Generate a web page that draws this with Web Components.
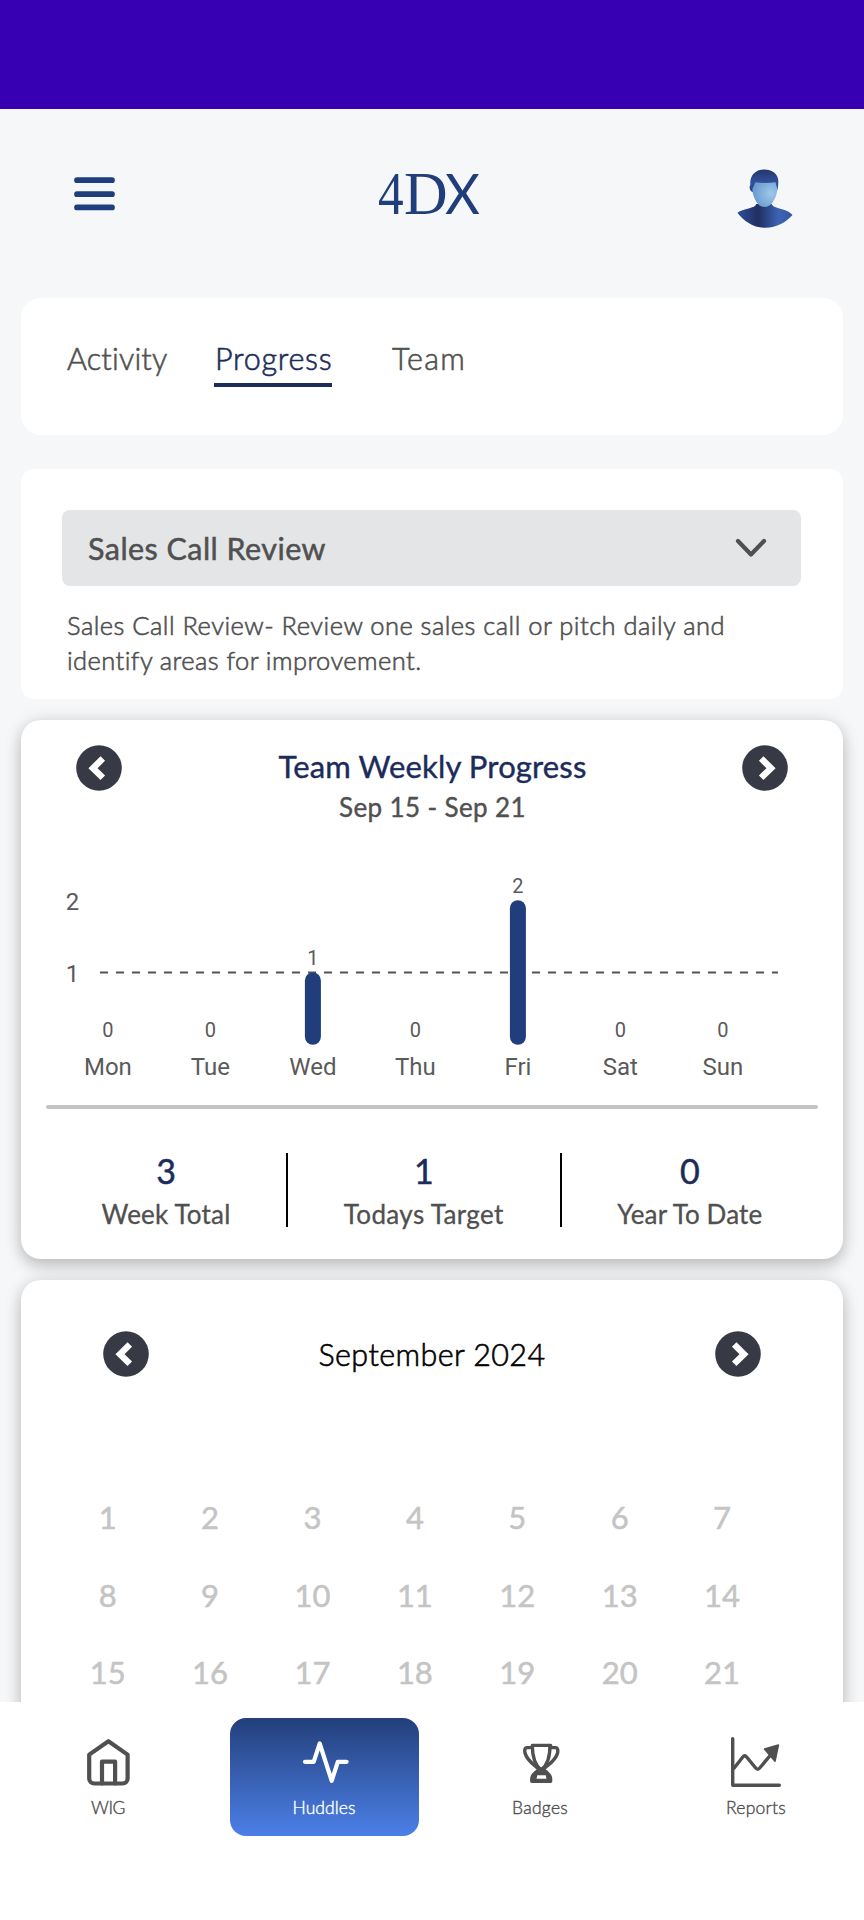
<!DOCTYPE html>
<html lang="en">
  <head>
    <meta charset="UTF-8" />
    <meta name="viewport" content="width=device-width, initial-scale=1.0" />
    <title>4DX Huddles</title>
    <style>
      html,
      body {
        margin: 0;
        height: 100%;
      }
      body {
        font-family: Lato, 'Noto Sans', sans-serif;
        font-weight: 300;
        -webkit-text-stroke: 0.6px;
        color: #505050;
        background: #f5f7f9;
        overflow: hidden;
      }
    </style>
  </head>
  <body>
    <app-shell>
      <app-header slot="header"></app-header>
      <app-card style="height: 137px">
        <tab-bar></tab-bar>
      </app-card>
      <app-card style="height: 230px; margin-top: 34px; --radius: 13px">
        <lead-measure>
          <fit-text width="238">Sales Call Review</fit-text>
          <fit-text slot="note" width="658">Sales Call Review- Review one sales call or pitch daily and</fit-text>
          <fit-text slot="note" width="355">identify areas for improvement.</fit-text>
        </lead-measure>
      </app-card>
      <app-card raised style="height: 539px; margin-top: 21px">
        <weekly-progress values="0,0,1,0,2,0,0"></weekly-progress>
      </app-card>
      <app-card raised style="height: 600px; margin-top: 21px">
        <month-calendar></month-calendar>
      </app-card>
      <bottom-nav slot="nav"></bottom-nav>
    </app-shell>

    <script>
      const define = (name, html, setup) => {
        const template = document.createElement('template');
        template.innerHTML = html;
        customElements.define(
          name,
          class extends HTMLElement {
            connectedCallback() {
              if (this.shadowRoot) return;
              const shadow = this.attachShadow({ mode: 'open' });
              shadow.appendChild(template.content.cloneNode(true));
              if (setup) setup(this, shadow);
            }
          }
        );
      };

      define(
        'app-shell',
        `<style>
          :host { display: flex; flex-direction: column; height: 1920px; overflow: hidden; }
          .status { flex: none; height: 108.6px; background: #3700b3; }
          main { flex: 1; min-height: 0; overflow: hidden; padding: 0 21px; }
        </style>
        <div class="status"></div>
        <slot name="header"></slot>
        <main><slot></slot></main>
        <slot name="nav"></slot>`
      );

      define(
        'app-header',
        `<style>
          :host {
            display: grid; grid-template-columns: 304px 1fr 56px; align-items: center;
            flex: none; height: 189.4px; box-sizing: border-box; padding: 0 71px 19px 74px;
            font-weight: 400; -webkit-text-stroke: 0;
          }
          svg { display: block; }
          .logo { color: #203e7b; font: 61px/60px 'Liberation Serif', serif; display: flex; align-items: baseline; margin-top: -1px; }
          .four { width: 25.5px; transform: scaleX(.84); transform-origin: 0 0; }
          .d { width: 43px; transform: scaleX(.99); transform-origin: 0 0; }
          .x { font: 56px/60px Lato, sans-serif; transform: scaleX(.96); transform-origin: 0 0; margin-left: -2px; }
          .avatar { margin-top: 11px; }
        </style>
        <svg width="41" height="34" stroke="#203e7b" stroke-width="5.7" stroke-linecap="round">
          <path d="M3 3.2H38M3 17.2H38M3 30.4H38" />
        </svg>
        <div class="logo"><span class="four">4</span><span class="d">D</span><span class="x">X</span></div>
        <svg class="avatar" width="56" height="60" viewBox="0 0 56 60">
          <defs>
            <linearGradient id="suit">
              <stop offset="0" stop-color="#2f4f98" />
              <stop offset=".38" stop-color="#212f63" />
              <stop offset=".75" stop-color="#3c64b4" />
              <stop offset="1" stop-color="#34569f" />
            </linearGradient>
            <linearGradient id="hair" x2="0" y2="1">
              <stop offset="0" stop-color="#24366c" />
              <stop offset=".6" stop-color="#33529d" />
              <stop offset="1" stop-color="#263d7a" />
            </linearGradient>
            <radialGradient id="face" cx=".75" cy=".45" r=".75">
              <stop offset="0" stop-color="#9dc8e8" />
              <stop offset="1" stop-color="#6799cd" />
            </radialGradient>
          </defs>
          <path fill="url(#suit)" d="M.4 43.7C6 39.5 18.5 39.5 19.3 35H34.7C35.5 40 50 39 55.5 46 49 53 40 58.8 28.3 58.8 16 58.8 7 52 .4 43.7Z" />
          <path fill="url(#hair)" d="M15.5 23C12.5 22 12 17.5 13.3 16 12.5 5 19.5 .4 27.3 .4S42 5 41.3 13.5C41.3 18 40.5 21 39.5 23Z" />
          <path fill="url(#face)" d="M18.5 13.3Q28 14.6 38.5 13.2L40.3 20C40 26 37.8 30 35.5 33.6 33.5 36.7 30.5 38 27.5 38S21.5 36.3 19.6 33.2C17.5 30 15.3 25 15.3 20Z" />
        </svg>`
      );

      define(
        'app-card',
        `<style>
          :host {
            display: block; box-sizing: border-box; background: #fff;
            border-radius: var(--radius, 20px);
          }
          :host([raised]) { box-shadow: 0 7px 16px rgba(0, 0, 0, .2), 0 0 18px rgba(0, 0, 0, .09); }
        </style>
        <slot></slot>`
      );

      define(
        'tab-bar',
        `<style>
          :host { display: flex; align-items: flex-start; padding: 38.5px 0 0 46px; font-size: 30.5px; line-height: 44px; }
          .tab { box-sizing: border-box; height: 50.5px; }
          .active { color: #1b2c5a; border-bottom: 4.5px solid #1b2c5a; margin: 0 59.5px 0 46.5px; padding-left: 1px; }
        </style>
        <div class="tab"><fit-text width="101">Activity</fit-text></div>
        <div class="tab active"><fit-text width="117.5">Progress</fit-text></div>
        <div class="tab"><fit-text width="74">Team</fit-text></div>`
      );

      define(
        'lead-measure',
        `<style>
          :host { display: block; padding: 41.5px 42px 0 41px; }
          .select {
            display: flex; align-items: center; justify-content: space-between; box-sizing: border-box;
            height: 76px; padding: 0 33px 0 26px; border-radius: 8px; background: #e4e5e7;
            font-size: 30.5px; font-weight: 400; -webkit-text-stroke: .5px;
          }
          .note { display: flex; flex-direction: column; align-items: flex-start; padding: 22px 0 0 5px; font-size: 25.5px; line-height: 34.5px; }
        </style>
        <div class="select">
          <slot></slot>
          <svg width="33" height="22" fill="none" stroke="#505050" stroke-width="4.2" stroke-linecap="round" stroke-linejoin="round">
            <path d="M3 4L16 17.5L29 4" />
          </svg>
        </div>
        <div class="note"><slot name="note"></slot></div>`
      );

      define(
        'arrow-button',
        `<style>
          :host { display: block; width: 46px; height: 46px; }
          :host([next]) { transform: scaleX(-1); }
          svg { display: block; }
        </style>
        <svg width="46" height="46">
          <circle cx="23" cy="23" r="22.8" fill="#373a45" />
          <path d="M26.8 13.5L17 23.2L26.8 32.8" fill="none" stroke="#fff" stroke-width="6.4" />
        </svg>`
      );

      define(
        'weekly-progress',
        `<style>
          :host { display: block; padding: 25px 25px 0; }
          header { display: flex; justify-content: space-between; height: 85px; padding: 0 30px; }
          .title { text-align: center; font-weight: 400; -webkit-text-stroke: .4px; margin: -1px 0 0 1px; }
          .title div { font-size: 31px; line-height: 44px; color: #1b2c5a; }
          .title div + div { font-size: 26px; line-height: 39px; color: #505050; }
          svg { display: block; }
          text { font-family: Roboto, sans-serif; font-weight: 400; -webkit-text-stroke: 0; fill: #5a5a5a; font-size: 24px; }
          .value { font-size: 20px; text-anchor: middle; }
          .day { text-anchor: middle; }
          hr { height: 4px; margin: 0 0 .5px; border: 0; border-radius: 3px; background: #c4c4c4; }
          .stats { display: grid; grid-template-columns: 242px 273.5px 1fr; margin-top: 43.5px; }
          .stats > div { height: 74px; text-align: center; box-sizing: border-box; border-right: 2.6px solid #000; }
          .stats > div:last-child { border: 0; }
          b { display: block; font-weight: 400; font-size: 34px; line-height: 36px; color: #1b2c5a; -webkit-text-stroke: .5px; }
          .stats fit-text { font-size: 26px; font-weight: 400; line-height: 50px; height: 38px; -webkit-text-stroke: .3px; }
        </style>
        <header>
          <arrow-button></arrow-button>
          <div class="title">
            <div><fit-text width="308">Team Weekly Progress</fit-text></div>
            <div><fit-text width="187">Sep 15 - Sep 21</fit-text></div>
          </div>
          <arrow-button next></arrow-button>
        </header>
        <svg width="772" height="275.5" viewBox="46 829.7 772 275.5"></svg>
        <hr />
        <div class="stats">
          <div><b>3</b><fit-text width="129">Week Total</fit-text></div>
          <div><b>1</b><fit-text width="160">Todays Target</fit-text></div>
          <div><b>0</b><fit-text width="145">Year To Date</fit-text></div>
        </div>`,
        (host, shadow) => {
          const days = ['Mon', 'Tue', 'Wed', 'Thu', 'Fri', 'Sat', 'Sun'];
          const values = host.getAttribute('values').split(',').map(Number);
          let out = `
            <text x="65.7" y="909.8">2</text><text x="65.7" y="982">1</text>
            <path d="M100 972.3H778" stroke="#555" stroke-width="2" stroke-dasharray="8 8" />`;
          values.forEach((v, i) => {
            const x = 107.9 + i * 102.5;
            const top = 1044.5 - v * 72.3;
            if (v) out += `<rect x="${x - 8}" y="${top}" width="16" height="${v * 72.3}" rx="8" fill="#203e7b" />`;
            out += `<text class="value" x="${x}" y="${v ? top - 7.5 : 1036.7}">${v}</text>`;
            out += `<text class="day" x="${x}" y="1075">${days[i]}</text>`;
          });
          shadow.querySelector('svg').innerHTML = out;
        }
      );

      define(
        'month-calendar',
        `<style>
          :host { display: block; padding: 51px 36px 0; }
          header { display: flex; justify-content: space-between; align-items: center; height: 46px; padding: 0 46px; color: #000; font-size: 30.5px; }
          .days {
            display: grid; grid-template-columns: repeat(7, 102.4px); grid-auto-rows: 77.5px;
            align-items: center; justify-items: center; margin-top: 101.5px; margin-left: -.5px;
            color: #c4c4c4; font-size: 31px; font-weight: 400; -webkit-text-stroke: .5px;
          }
        </style>
        <header>
          <arrow-button></arrow-button>
          <fit-text width="227">September 2024</fit-text>
          <arrow-button next></arrow-button>
        </header>
        <div class="days"></div>`,
        (host, shadow) => {
          const grid = shadow.querySelector('.days');
          for (let d = 1; d <= 21; d++) {
            const cell = document.createElement('span');
            cell.textContent = d;
            grid.appendChild(cell);
          }
        }
      );

      define(
        'nav-item',
        `<style>
          :host {
            display: flex; flex-direction: column; align-items: center; gap: 10px; box-sizing: border-box;
            width: 189px; height: 118px; padding-top: 18px; border-radius: 16px;
            font-size: 17.5px; line-height: 20px; color: #505050; -webkit-text-stroke: .4px;
          }
          :host([active]) { color: #fff; background: linear-gradient(#233f7b, #4c80e8); }
        </style>
        <slot name="icon"></slot>
        <slot></slot>`
      );

      define(
        'bottom-nav',
        `<style>
          :host {
            display: grid; grid-template-columns: repeat(4, 1fr); justify-items: center; flex: none;
            height: 218.4px; box-sizing: border-box; padding-top: 16.4px; background: #fff;
          }
          svg { width: 56px; height: 52px; fill: none; stroke: #505050; stroke-linecap: round; stroke-linejoin: round; }
        </style>
        <nav-item>
          <svg slot="icon" stroke-width="4.2">
            <path d="M28.4 5.2L47.6 18.6V42.5a5 5 0 0 1-5 5H14.2a5 5 0 0 1-5-5V18.6Z" />
            <path d="M22 47.5V25.7H35.1V47.5" />
          </svg>
          <fit-text width="34">WIG</fit-text>
        </nav-item>
        <nav-item active>
          <svg slot="icon" style="stroke: #fff" stroke-width="4.2">
            <path d="M9 25.8H17.7L23.7 7.5L35.7 44.8L41.8 25.8H50.6" />
          </svg>
          <fit-text width="63">Huddles</fit-text>
        </nav-item>
        <nav-item>
          <svg slot="icon" stroke-width="3.4">
            <path d="M20.3 9.4H38.7M20.3 9.4C20.3 22 23.5 29.5 29.2 34C35 29.5 38 22 38 9.4" />
            <path d="M20 11.6H15C12.5 11.6 12.5 14.5 13 17C15 25 22 28.5 27.5 33.5C24 36 19.8 39.5 19.8 42.5V45.2H38.6V42.5C38.6 39.5 34.5 36 31 33.5C36.5 28.5 43.5 25 45.6 17C46 14.5 46 11.6 43.5 11.6H38.5" />
            <path d="M24.5 37.5H34M22 44.5H37M23.5 39.5L22.5 44M35.5 39.5L36.5 44M29.2 33V36" />
          </svg>
          <fit-text width="56">Badges</fit-text>
        </nav-item>
        <nav-item>
          <svg slot="icon" stroke-width="3.4">
            <path d="M4.7 2.6V49.2H51.3" />
            <path d="M6 32.3L14.8 21Q16.7 18.6 18.6 21L27.7 32Q29.7 34.4 31.7 32L43 18.5" />
            <path d="M36.5 13L50.4 9L47 25.2Z" fill="#505050" stroke-width="1.6" />
          </svg>
          <fit-text width="60">Reports</fit-text>
        </nav-item>`
      );

      // spreads the letters so the line takes the given width;
      // defined last, when the surrounding font sizes already apply
      define(
        'fit-text',
        `<style>
          :host { display: inline-block; white-space: nowrap; }
        </style>
        <slot></slot>`,
        (host) => {
          const natural = host.getBoundingClientRect().width;
          const gap = (Number(host.getAttribute('width')) - natural) / host.textContent.trim().length;
          host.style.letterSpacing = gap + 'px';
        }
      );
    </script>
  </body>
</html>
